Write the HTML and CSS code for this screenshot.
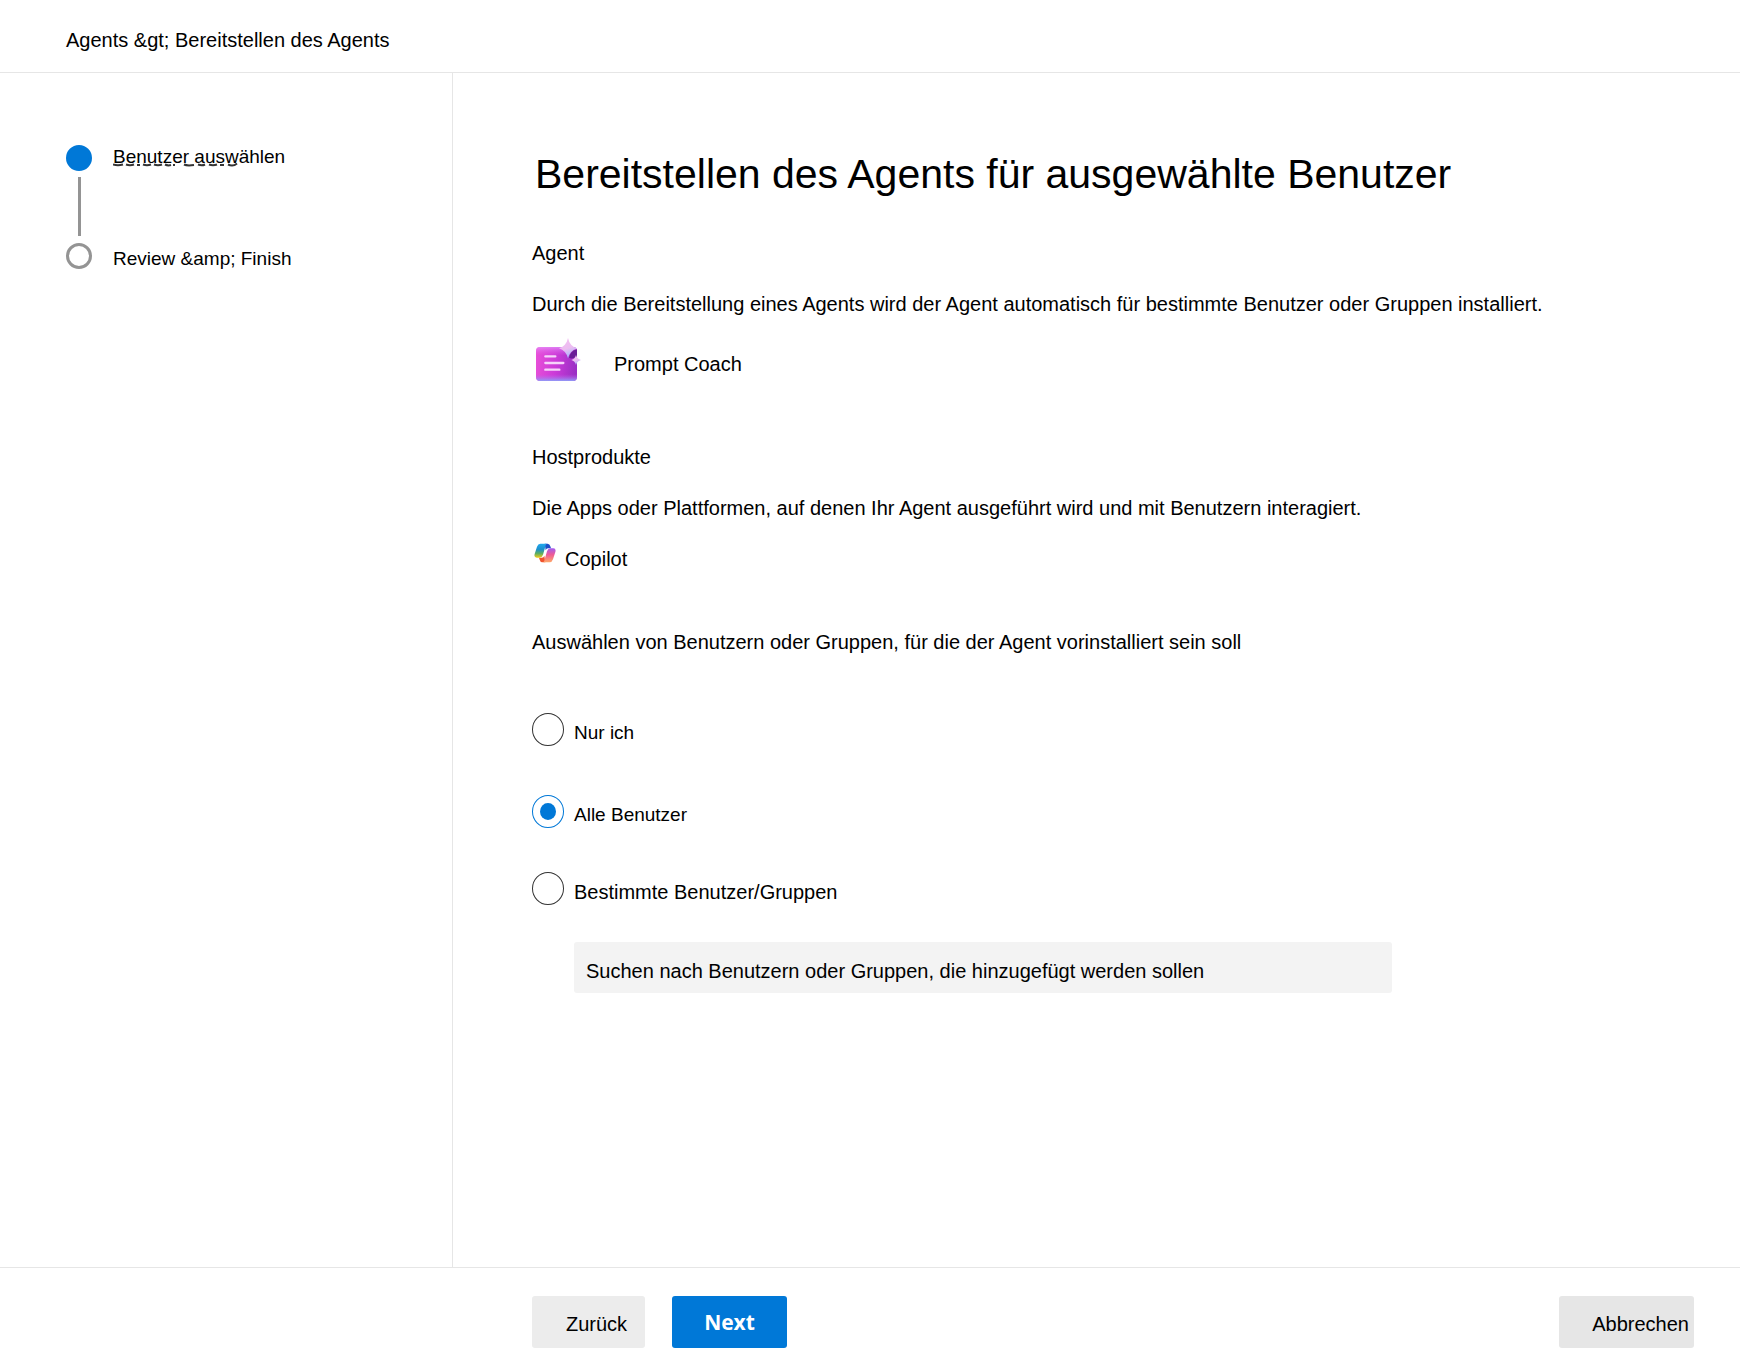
FILE: index.html
```html
<!DOCTYPE html>
<html lang="de">
<head>
  <meta charset="utf-8">
  <meta name="viewport" content="width=device-width, initial-scale=1">
  <title>Bereitstellen des Agents</title>
  <link rel="stylesheet" href="styles.css">
</head>
<body>
  <header class="topbar">Agents &amp;gt; Bereitstellen des Agents</header>

  <div class="layout">
    <nav class="sidebar" aria-label="Schritte">
      <ol class="steps">
        <li class="step" aria-current="step">
          <span class="step-track">
            <span class="step-dot step-dot-current"></span>
            <span class="step-line"></span>
          </span>
          <span class="step-label">Benutzer auswählen
            <svg class="step-mark" width="126" height="4" viewBox="0 0 126 4" aria-hidden="true">
              <path d="M0 1.500Q5 3 10 1.500M13 1.500Q17 3 21 1.500M24 2h3M30 1.500Q34 3 38 1.500M41 1.500Q45 3 49 1.500M52 1.500Q55 3 58 2M60 2h2M71 1.500Q74 3 81 2M85 1.500Q89 3 92 1.500M96 1.500Q100 3 104 1.500M107 2h4M115 1.500Q120 4 124 .5"/>
            </svg>
          </span>
        </li>
        <li class="step">
          <span class="step-track"><span class="step-dot"></span></span>
          <span class="step-label step-label-next">Review &amp;amp; Finish</span>
        </li>
      </ol>
    </nav>

    <main class="content">
      <h1 class="title">Bereitstellen des Agents für ausgewählte Benutzer</h1>

      <section class="section">
        <h2 class="section-title">Agent</h2>
        <p class="section-text">Durch die Bereitstellung eines Agents wird der Agent automatisch für bestimmte Benutzer oder Gruppen installiert.</p>
        <div class="agent">
          <svg class="agent-icon" width="46" height="44" viewBox="48 24 138 132" aria-hidden="true">
            <defs>
              <linearGradient id="card" x1="0" y1="0.3" x2="1" y2="0.4">
                <stop offset="0" stop-color="#e84fd8"/>
                <stop offset=".5" stop-color="#cb3ad8"/>
                <stop offset="1" stop-color="#9a2fc4"/>
              </linearGradient>
              <linearGradient id="cardEdge" x1="0" y1="0" x2="0" y2="1">
                <stop offset="0" stop-color="#e79bff" stop-opacity=".7"/>
                <stop offset=".25" stop-color="#e060e8" stop-opacity="0"/>
                <stop offset=".8" stop-color="#c060e8" stop-opacity="0"/>
                <stop offset="1" stop-color="#8f9cf8"/>
              </linearGradient>
              <linearGradient id="spark" x1="0" y1="0" x2="0.3" y2="1">
                <stop offset="0" stop-color="#f3bdf0"/>
                <stop offset=".6" stop-color="#ecbdf1"/>
                <stop offset="1" stop-color="#a9b4fb"/>
              </linearGradient>
            </defs>
            <rect x="48" y="51" width="123" height="102" rx="12" fill="url(#card)"/>
            <rect x="48" y="51" width="123" height="102" rx="12" fill="url(#cardEdge)"/>
            <path d="M171 58Q151 62 147 83Q155 89 171 80Z" fill="#6b1d96"/>
            <path d="M76 79h30M76 99h54M76 119h42" stroke="#f6d3fa" stroke-width="7" stroke-linecap="round"/>
            <path d="M144 24Q149 48 171 55Q150 62 144 85Q138 62 117 55Q139 48 144 24Z" fill="url(#spark)"/>
            <path d="M168 75Q171 87 183 90Q171 93 168 105Q165 93 154 90Q165 87 168 75Z" fill="url(#spark)"/>
          </svg>
          <span class="agent-name">Prompt Coach</span>
        </div>
      </section>

      <section class="section section-host">
        <h2 class="section-title">Hostprodukte</h2>
        <p class="section-text">Die Apps oder Plattformen, auf denen Ihr Agent ausgeführt wird und mit Benutzern interagiert.</p>
        <div class="host">
          <svg class="host-icon" width="22" height="20" viewBox="42 40 66 60" aria-hidden="true">
            <defs>
              <linearGradient id="left" x1="0" y1="0" x2="0" y2="1">
                <stop offset="0" stop-color="#23a9ee"/>
                <stop offset=".4" stop-color="#1a8fce"/>
                <stop offset=".7" stop-color="#5dae62"/>
                <stop offset="1" stop-color="#f2cb18"/>
              </linearGradient>
              <linearGradient id="right" x1="0" y1="0" x2="0" y2="1">
                <stop offset="0" stop-color="#a35cf0"/>
                <stop offset=".45" stop-color="#ee5a95"/>
                <stop offset="1" stop-color="#ffa968"/>
              </linearGradient>
            </defs>
            <path d="M74 42H83Q89 42 91 50L93 56H84Q79 56 77 62Z" fill="#1d4fc8"/>
            <path d="M76 98H67Q61 98 59 90L57 84H66Q71 84 73 78Z" fill="#f0532d"/>
            <path d="M80 42H61Q54 42 51 51L44 73Q41 84 50 84H59Q66 84 69 75L75 54Q77 44 80 42Z" fill="url(#left)"/>
            <path d="M70 98H89Q96 98 99 89L106 67Q109 56 100 56H91Q84 56 81 65L75 86Q73 96 70 98Z" fill="url(#right)"/>
          </svg>
          <span class="host-name">Copilot</span>
        </div>
      </section>

      <fieldset class="audience">
        <legend class="audience-title">Auswählen von Benutzern oder Gruppen, für die der Agent vorinstalliert sein soll</legend>
        <div class="option">
          <input class="radio" type="radio" name="audience" id="only-me">
          <label class="option-label" for="only-me">Nur ich</label>
        </div>
        <div class="option">
          <input class="radio" type="radio" name="audience" id="all-users" checked>
          <label class="option-label" for="all-users">Alle Benutzer</label>
        </div>
        <div class="specific">
          <div class="option">
            <input class="radio" type="radio" name="audience" id="specific-users">
            <label class="option-label option-label-wide" for="specific-users">Bestimmte Benutzer/Gruppen</label>
          </div>
          <input class="search" type="text" aria-label="Benutzer oder Gruppen suchen" placeholder="Suchen nach Benutzern oder Gruppen, die hinzugefügt werden sollen">
        </div>
      </fieldset>
    </main>
  </div>

  <footer class="actions">
    <button class="button" type="button">Zurück</button>
    <button class="button button-primary" type="button">Next</button>
    <button class="button button-cancel" type="button">Abbrechen</button>
  </footer>
</body>
</html>
```
FILE: styles.css
```css
* {
  box-sizing: border-box;
}

body {
  margin: 0;
  min-height: 100vh;
  display: flex;
  flex-direction: column;
  background: #fff;
  color: #000;
  font: 20px/24px "Liberation Sans", Arial, sans-serif;
}

h1,
h2,
p,
ol {
  margin: 0;
  padding: 0;
  font-weight: 400;
}

.topbar {
  padding: 28px 66px 20px;
  border-bottom: 1px solid #e6e6e6;
}

.layout {
  flex: 1;
  display: grid;
  grid-template-columns: 453px minmax(0, 1fr);
}

/* Step list */

.sidebar {
  padding: 72px 24px 0 66px;
  border-right: 1px solid #e6e6e6;
}

.steps {
  list-style: none;
}

.step {
  display: flex;
  gap: 21px;
  font-size: 19px;
}

.step-track {
  display: flex;
  flex-direction: column;
  align-items: center;
}

.step-dot {
  width: 26px;
  height: 26px;
  border: 3px solid #949494;
  border-radius: 50%;
}

.step-dot-current {
  border-color: #0078d7;
  background: #0078d7;
}

.step-line {
  width: 3px;
  height: 59px;
  margin: 6px 0 7px;
  background: #949494;
}

.step-label {
  position: relative;
}

.step-label-next {
  padding-top: 4px;
}

.step-mark {
  position: absolute;
  left: 0;
  top: 18px;
  fill: none;
  stroke: #333;
  stroke-width: 2;
}

/* Main column */

.content {
  padding: 75px 40px 40px 79px;
}

.title {
  padding-left: 3px;
  font-size: 41px;
  line-height: 52px;
}

.section {
  margin-top: 41px;
}

.section-title {
  font-size: 20px;
}

.section-text {
  margin-top: 27px;
}

.agent {
  display: flex;
  align-items: center;
  gap: 32px;
  margin-top: 22px;
  padding-left: 4px;
}

.agent-icon {
  flex: none;
}

.agent-name {
  padding-top: 8px;
}

.section-host {
  margin-top: 63px;
}

.host {
  display: flex;
  gap: 9px;
  margin-top: 23px;
  padding-left: 2px;
}

.host-name {
  padding-top: 4px;
}

/* Audience choice */

.audience {
  min-width: 0;
  margin: 59px 0 0;
  padding: 0;
  border: 0;
}

.audience-title {
  padding: 0;
  margin-bottom: 59px;
}

.option {
  display: flex;
  gap: 10px;
}

.option + .option {
  margin-top: 49px;
}

.option-label {
  padding-top: 8px;
  font-size: 19px;
}

.option-label-wide {
  font-size: 20px;
}

.radio {
  appearance: none;
  flex: none;
  display: grid;
  place-items: center;
  width: 32px;
  height: 33px;
  margin: 0;
  border: 1px solid #333;
  border-radius: 50%;
}

.radio:checked {
  border-color: #0078d7;
}

.radio:checked::before {
  content: "";
  width: 16px;
  height: 17px;
  border-radius: 50%;
  background: #0078d7;
}

.specific {
  margin-top: 44px;
}

.search {
  display: block;
  width: calc(100% - 42px);
  max-width: 818px;
  height: 51px;
  margin: 37px 0 0 42px;
  padding: 8px 12px 0;
  border: 0;
  border-radius: 3px;
  background: #f3f3f3;
  color: #000;
  font: inherit;
}

.search::placeholder {
  color: #000;
  opacity: 1;
}

/* Footer */

.actions {
  display: flex;
  gap: 27px;
  padding: 28px 46px 15px 532px;
  border-top: 1px solid #e6e6e6;
}

.button {
  height: 52px;
  padding: 4px 18px 0 34px;
  border: 0;
  border-radius: 3px;
  background: #ececec;
  color: #000;
  font: inherit;
}

.button-primary {
  padding: 0 32px;
  background: #0078d7;
  color: #fff;
  font-family: "Open Sans", sans-serif;
  font-size: 21px;
  font-weight: 700;
}

.button-cancel {
  margin-left: auto;
  padding: 4px 5px 0 33px;
  background: #e6e6e6;
}
```
